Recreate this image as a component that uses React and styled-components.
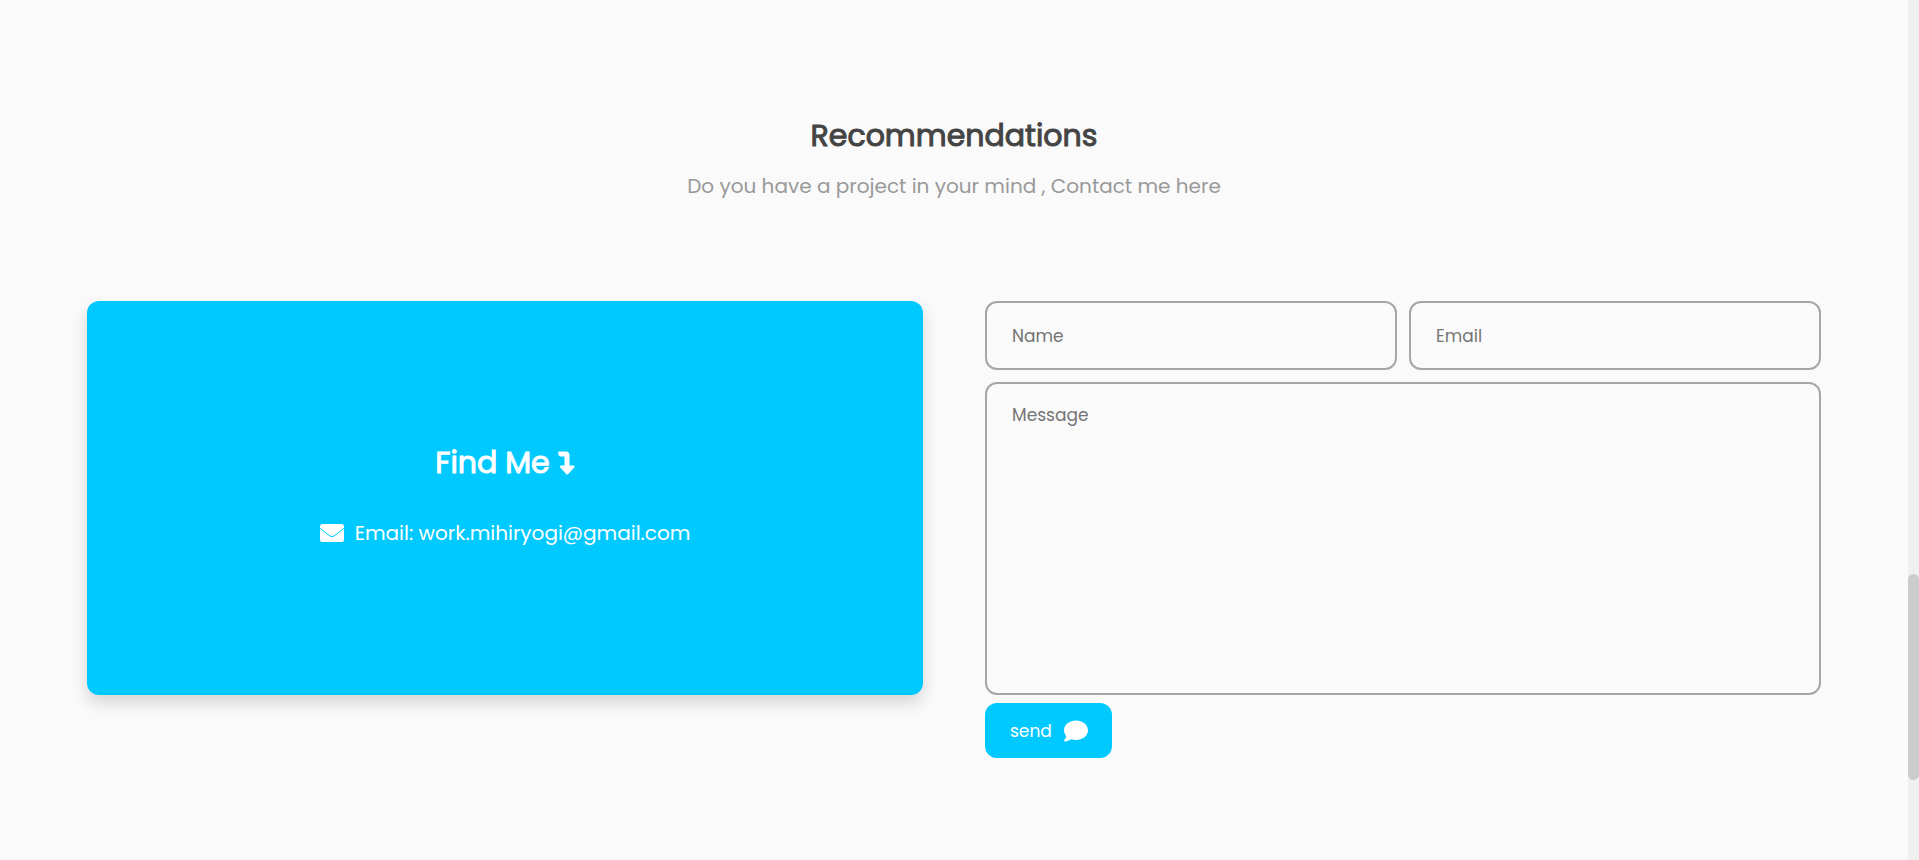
import React from "react";
import styled, { createGlobalStyle } from "styled-components";
import { FaComment } from "react-icons/fa6";

const GlobalStyle = createGlobalStyle`
  *, *::before, *::after { box-sizing: border-box; }
  body {
    margin: 0;
    background: #fafafa;
    font-family: Poppins, Inter, "Liberation Sans", sans-serif;
  }
  button, input, textarea { font: inherit; }
`;

const Shell = styled.div`
  display: flex;
  height: 100vh;
  overflow: hidden;
`;

const Page = styled.main`
  flex: 1;
  min-width: 0;
  display: flex;
  flex-direction: column;
  border-bottom: 2px solid #f7f7f7;
`;

const Section = styled.section`
  padding: 112px 87px 0;
`;

const Header = styled.header`
  text-align: center;
  margin-bottom: 102px;
`;

const Title = styled.h2`
  margin: 0 0 13px;
  font-size: 30px;
  line-height: 48px;
  font-weight: 400;
  -webkit-text-stroke: 1px currentColor;
  color: #444;
`;

const Subtitle = styled.p`
  margin: 0;
  font-size: 20px;
  line-height: 26px;
  color: #999;
`;

const Columns = styled.div`
  display: grid;
  grid-template-columns: 1fr 1fr;
  gap: 62px;
  align-items: start;
`;

const Card = styled.div`
  height: 394px;
  padding-bottom: 8px;
  border-radius: 12px;
  background: #00c9ff;
  color: #fff;
  box-shadow: 0 8px 16px rgba(0, 0, 0, 0.15);
  display: flex;
  flex-direction: column;
  align-items: center;
  justify-content: center;
  gap: 30px;
`;

const CardTitle = styled.h3`
  display: flex;
  align-items: center;
  gap: 8px;
  margin: 0;
  font-size: 30px;
  line-height: 48px;
  font-weight: 400;
  -webkit-text-stroke: 1px currentColor;
`;

const EmailLine = styled.a`
  display: flex;
  align-items: center;
  gap: 11px;
  font-size: 20px;
  line-height: 32px;
  color: inherit;
  text-decoration: none;
`;

const Form = styled.form`
  display: grid;
  grid-template-columns: 1fr 1fr;
  gap: 12px;
`;

const Input = styled.input`
  width: 100%;
  height: 69px;
  padding: 0 25px;
  border: 2px solid #a6a6a6;
  border-radius: 12px;
  background: transparent;
  color: #444;
  font-size: 17px;
  outline: none;
  &::placeholder { color: #757575; opacity: 1; }
`;

const Message = styled(Input)`
  grid-column: 1 / -1;
  display: block;
  height: 313px;
  padding: 19px 25px;
  line-height: 24px;
  resize: none;
`;

const SendButton = styled.button`
  justify-self: start;
  display: flex;
  align-items: center;
  gap: 12px;
  height: 55px;
  margin-top: -4px;
  padding: 0 24px 0 25px;
  border: 0;
  border-radius: 12px;
  background: #00c9ff;
  color: #fff;
  font-size: 17px;
`;

const ScrollTrack = styled.div`
  width: 11px;
  display: grid;
  grid-template-rows: 574fr 206fr 80fr;
  background: #f0f0f0;
`;

const ScrollThumb = styled.div`
  grid-row: 2;
  border-radius: 6px;
  background: #ccc;
`;

export default function App() {
  return (
    <>
      <GlobalStyle />
      <Shell>
        <Page>
          <Section>
            <Header>
              <Title>Recommendations</Title>
              <Subtitle>Do you have a project in your mind , Contact me here</Subtitle>
            </Header>
            <Columns>
              <Card>
                <CardTitle>
                  Find Me
                  <svg width="17" height="24" viewBox="0 0 17 24" fill="#fff" stroke="none" aria-hidden="true">
                    <path d="M1 0.500H7.500Q11.500 0.500 11.500 4.500V14.500H15.800Q17.300 15 16.200 16.500L10.200 23Q9.200 24 8.200 23L2.200 16.500Q1.200 15 2.700 14.500H6.500V5.500H2.500Q1.500 5.500 1 4.700L0.200 2Q0 0.700 1 0.500Z" />
                  </svg>
                </CardTitle>
                <EmailLine href="mailto:work.mihiryogi@gmail.com">
                  <svg width="24" height="18" viewBox="0 0 24 18" aria-hidden="true">
                    <rect width="24" height="18" rx="2.500" fill="#fff" />
                    <path d="M0 4.300L10 12Q12 13.500 14 12L24 4.300" fill="none" stroke="#00c9ff" strokeWidth="1" />
                  </svg>
                  Email: work.mihiryogi@gmail.com
                </EmailLine>
              </Card>
              <Form onSubmit={(e) => e.preventDefault()}>
                <Input type="text" placeholder="Name" aria-label="Name" />
                <Input type="email" placeholder="Email" aria-label="Email" />
                <Message as="textarea" placeholder="Message" aria-label="Message" />
                <SendButton type="submit">
                  send
                  <FaComment size={24} aria-hidden="true" />
                </SendButton>
              </Form>
            </Columns>
          </Section>
        </Page>
        <ScrollTrack aria-hidden="true">
          <ScrollThumb />
        </ScrollTrack>
      </Shell>
    </>
  );
}
